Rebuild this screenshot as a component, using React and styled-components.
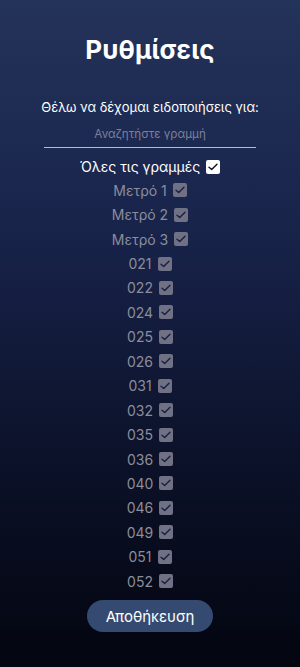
import React, { useState } from "react";
import styled, { createGlobalStyle } from "styled-components";

const Global = createGlobalStyle`
  html, body { margin: 0; padding: 0; }
  body { background: #03050f; font-family: Inter, "Noto Sans", sans-serif; }
  * { box-sizing: border-box; }
`;

const Screen = styled.div`
  min-height: 667px;
  width: 300px;
  background: linear-gradient(180deg, #24335a 0%, #18234a 35%, #0b1128 70%, #03050f 100%);
  display: flex;
  flex-direction: column;
  align-items: center;
  padding-top: 34px;
`;

const Title = styled.h1`
  margin: 0;
  font-size: 26px;
  line-height: 32px;
  font-weight: 700;
  color: #ffffff;
  letter-spacing: 0.1px;
`;

const Subtitle = styled.p`
  margin: 32px 0 0;
  font-size: 13px;
  line-height: 18px;
  color: #ffffff;
`;

const Search = styled.input`
  margin-top: 7px;
  width: 212px;
  height: 25px;
  background: transparent;
  border: none;
  border-bottom: 1.5px solid #b9bad2;
  text-align: center;
  font-family: Inter, "Noto Sans", sans-serif;
  font-size: 11.7px;
  color: #ffffff;
  outline: none;
  padding: 0 0 3px;
  &::placeholder { color: #7b809a; }
`;

const List = styled.div`
  margin-top: 7px;
  display: flex;
  flex-direction: column;
  align-items: center;
`;

const Row = styled.label`
  display: flex;
  align-items: center;
  justify-content: center;
  gap: 6px;
  height: ${p => (p.$all ? "23px" : "24.45px")};
  font-size: 14px;
  color: ${p => (p.$all ? "#ffffff" : "#8b8d9b")};
  cursor: pointer;
`;

const Box = styled.span`
  width: 14px;
  height: 14px;
  border-radius: 2px;
  background: ${p => (p.$all ? "#ffffff" : "#707184")};
  display: inline-flex;
  align-items: center;
  justify-content: center;
`;

const Button = styled.button`
  margin-top: 7px;
  width: 126px;
  height: 32px;
  border: none;
  border-radius: 16px;
  background: #354a70;
  color: #ffffff;
  font-family: Inter, "Noto Sans", sans-serif;
  font-size: 15px;
  cursor: pointer;
`;

const Check = ({ all }) => (
  <Box $all={all}>
    <svg width="10" height="8" viewBox="0 0 10 8" fill="none">
      <path d="M1 4.2 L3.7 6.6 L9 1.2" stroke={all ? "#0d1228" : "#1a2040"} strokeWidth="1.4" strokeLinecap="round" strokeLinejoin="round" />
    </svg>
  </Box>
);

const lines = ["Μετρό 1", "Μετρό 2", "Μετρό 3", "021", "022", "024", "025", "026", "031", "032", "035", "036", "040", "046", "049", "051", "052"];

export default function App() {
  const [q, setQ] = useState("");
  return (
    <>
      <Global />
      <Screen>
        <Title>Ρυθμίσεις</Title>
        <Subtitle>Θέλω να δέχομαι ειδοποιήσεις για:</Subtitle>
        <Search placeholder="Αναζητήστε γραμμή" value={q} onChange={e => setQ(e.target.value)} />
        <List>
          <Row $all>
            Όλες τις γραμμές <Check all />
          </Row>
          {lines.map(l => (
            <Row key={l}>
              {l} <Check />
            </Row>
          ))}
        </List>
        <Button>Αποθήκευση</Button>
      </Screen>
    </>
  );
}
